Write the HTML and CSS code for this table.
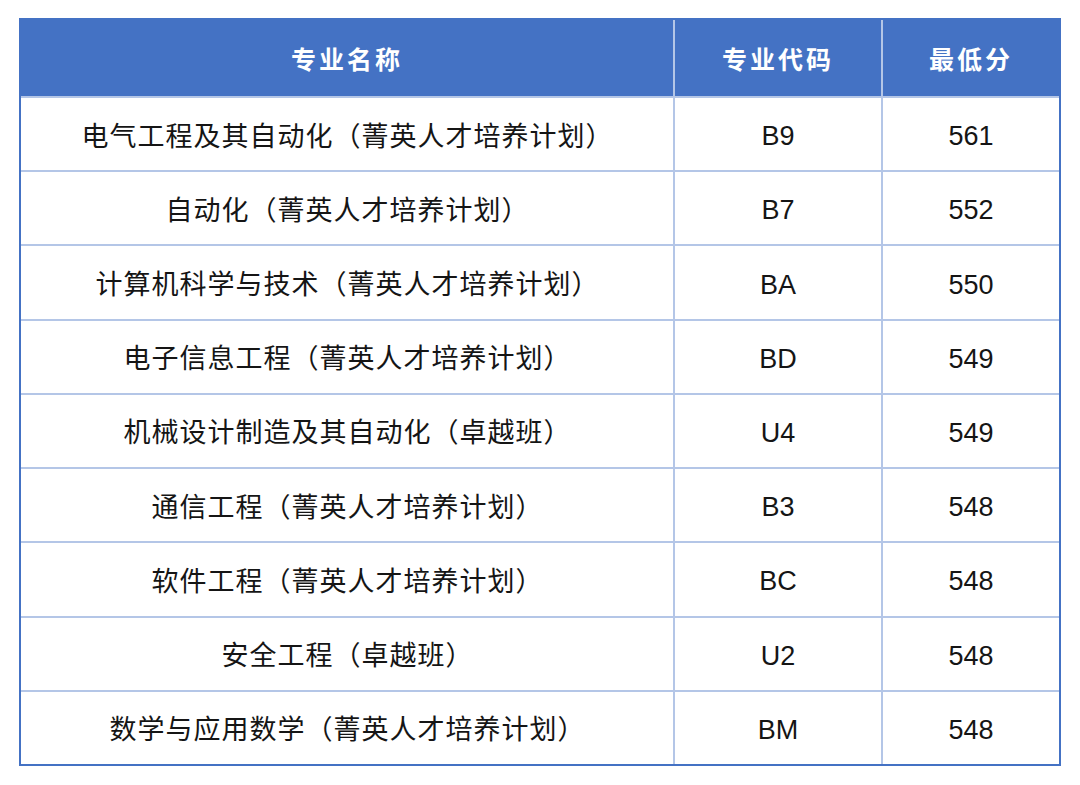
FILE: index.html
```html
<!DOCTYPE html>
<html lang="zh-CN">
<head>
<meta charset="utf-8">
<title>专业最低分</title>
<link rel="stylesheet" href="styles.css">
</head>
<body>
<div class="table">
  <div class="cell head">专业名称</div>
  <div class="cell head">专业代码</div>
  <div class="cell head">最低分</div>

  <div class="cell name">电气工程及其自动化（菁英人才培养计划）</div>
  <div class="cell num">B9</div>
  <div class="cell num">561</div>

  <div class="cell name">自动化（菁英人才培养计划）</div>
  <div class="cell num">B7</div>
  <div class="cell num">552</div>

  <div class="cell name">计算机科学与技术（菁英人才培养计划）</div>
  <div class="cell num">BA</div>
  <div class="cell num">550</div>

  <div class="cell name">电子信息工程（菁英人才培养计划）</div>
  <div class="cell num">BD</div>
  <div class="cell num">549</div>

  <div class="cell name">机械设计制造及其自动化（卓越班）</div>
  <div class="cell num">U4</div>
  <div class="cell num">549</div>

  <div class="cell name">通信工程（菁英人才培养计划）</div>
  <div class="cell num">B3</div>
  <div class="cell num">548</div>

  <div class="cell name">软件工程（菁英人才培养计划）</div>
  <div class="cell num">BC</div>
  <div class="cell num">548</div>

  <div class="cell name">安全工程（卓越班）</div>
  <div class="cell num">U2</div>
  <div class="cell num">548</div>

  <div class="cell name">数学与应用数学（菁英人才培养计划）</div>
  <div class="cell num">BM</div>
  <div class="cell num">548</div>
</div>
</body>
</html>
```
FILE: styles.css
```css
html, body {
  margin: 0;
  padding: 0;
  background: #ffffff;
}

body {
  padding: 18px 0 0 19px;
  font-family: "Liberation Sans", "Noto Sans CJK SC", sans-serif;
  color: #151515;
}

.table {
  box-sizing: border-box;
  width: 1042px;
  height: 748px;
  border: 2px solid #4472c4;
  background: #b4c6e7;
  display: grid;
  grid-template-columns: 652px 206px 176px;
  grid-template-rows: 76px repeat(9, 1fr);
  gap: 2px;
}

.cell {
  box-sizing: border-box;
  background: #ffffff;
  display: flex;
  align-items: center;
  justify-content: center;
  font-size: 27px;
  white-space: nowrap;
}

.head {
  background: #4472c4;
  color: #ffffff;
  font-weight: bold;
  font-size: 25px;
  letter-spacing: 3px;
}

.name {
  font-size: 27px;
  letter-spacing: 1px;
  padding-left: 1px;
}

.num {
  font-size: 27px;
  padding-top: 5px;
}
```
